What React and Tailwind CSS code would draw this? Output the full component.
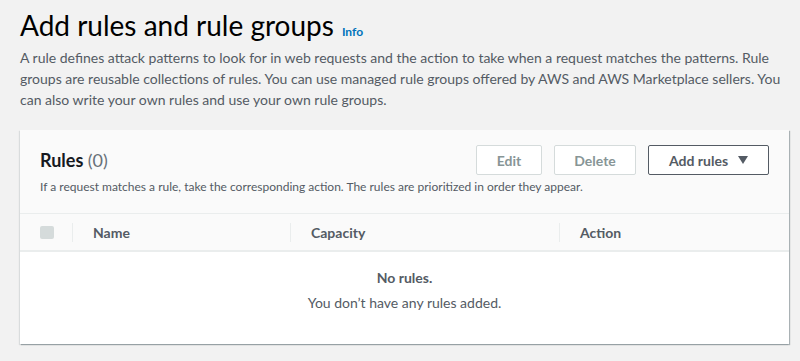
export default function App() {
  return (
    <div className="w-[800px] h-[361px] overflow-hidden bg-[#f2f2f2] px-5 pt-[7px] font-['Lato',sans-serif] text-[#16191f]">
      <div className="flex items-baseline gap-2">
        <h1 className="text-[28px] leading-[36px] text-black">Add rules and rule groups</h1>
        <span className="text-[12px] font-bold text-[#0073bb]">Info</span>
      </div>
      <p className="mt-[4px] whitespace-nowrap text-[14px] leading-[21px] text-[#545b64]">
        A rule defines attack patterns to look for in web requests and the action to take when a request matches the patterns. Rule
        <br />
        groups are reusable collections of rules. You can use managed rule groups offered by AWS and AWS Marketplace sellers. You
        <br />
        can also write your own rules and use your own rule groups.
      </p>

      <div className="mt-[20px] w-[769px] bg-white shadow-[1px_1px_1px_0_rgba(0,28,36,0.3),-1px_1px_1px_0_rgba(0,28,36,0.1)]">
        <div className="bg-[#fafafa] border-b border-[#eaeded] px-5 pt-[15px] pb-[19px]">
          <div className="flex items-center justify-between">
            <h2 className="text-[18px] font-bold text-[#16191f]">
              Rules <span className="font-normal text-[#687078]">(0)</span>
            </h2>
            <div className="flex gap-3">
              <button className="h-[30px] w-[66px] rounded-[2px] border border-[#d5dbdb] bg-white text-[14px] font-bold text-[#879596]">Edit</button>
              <button className="h-[30px] w-[82px] rounded-[2px] border border-[#d5dbdb] bg-white text-[14px] font-bold text-[#879596]">Delete</button>
              <button className="flex h-[30px] w-[121px] items-center justify-center gap-[10px] rounded-[2px] border border-[#545b64] bg-white text-[14px] font-bold text-[#545b64]">
                Add rules
                <svg width="10" height="8" viewBox="0 0 10 8"><path d="M0 0h10L5 8z" fill="#545b64" /></svg>
              </button>
            </div>
          </div>
          <p className="mt-[5px] text-[12px] leading-[14px] text-[#545b64]">
            If a request matches a rule, take the corresponding action. The rules are prioritized in order they appear.
          </p>
        </div>

        <div className="flex h-[38px] items-center bg-[#fafafa] border-b-2 border-[#eaeded] text-[14px] font-bold text-[#545b64]">
          <div className="flex w-[52px] items-center pl-5">
            <span className="block h-[13px] w-[14px] rounded-[2px] bg-[#d5dbdb]" />
          </div>
          <div className="flex w-[218px] items-center border-l border-[#eaeded] h-[19px] pl-5">Name</div>
          <div className="flex w-[269px] items-center border-l border-[#eaeded] h-[19px] pl-5">Capacity</div>
          <div className="flex flex-1 items-center border-l border-[#eaeded] h-[19px] pl-5">Action</div>
        </div>

        <div className="flex h-[92px] flex-col items-center pt-[16px] text-[14px] text-[#545b64]">
          <div className="font-bold leading-[20px]">No rules.</div>
          <div className="mt-[5px] leading-[20px]">You don’t have any rules added.</div>
        </div>
      </div>
    </div>
  );
}
